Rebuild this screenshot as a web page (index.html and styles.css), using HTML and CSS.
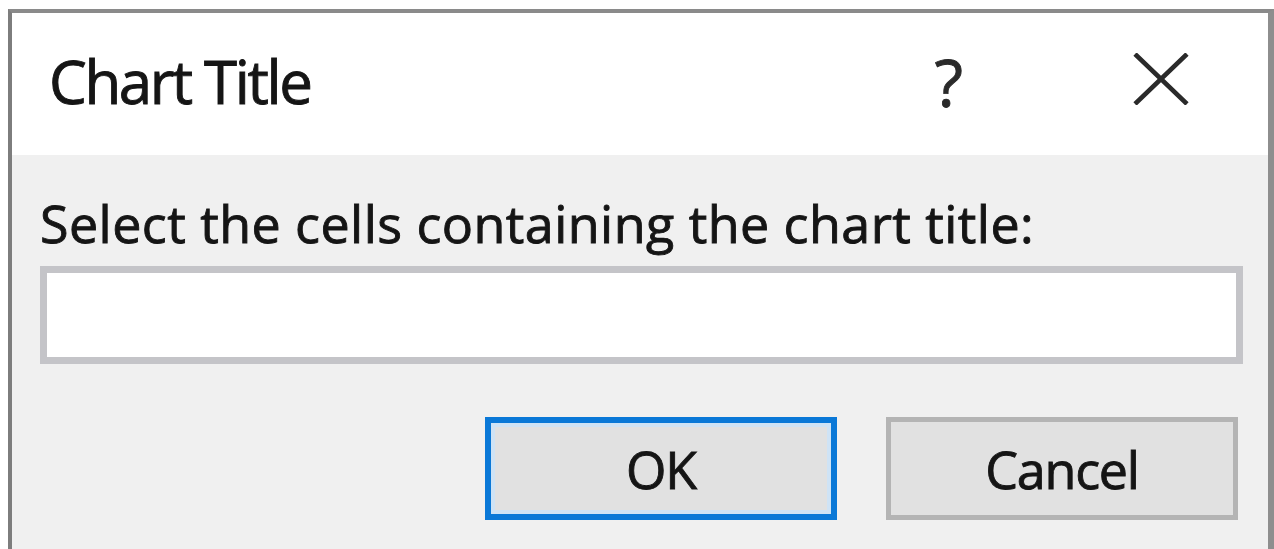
FILE: index.html
```html
<!DOCTYPE html>
<html lang="en">
<head>
<meta charset="utf-8">
<title>Chart Title</title>
<link rel="stylesheet" href="styles.css">
</head>
<body>
<div class="dialog">
  <div class="titlebar">
    <span class="title">Chart Title</span>
    <div class="title-actions">
      <span class="help">?</span>
      <svg class="close" width="56" height="52" viewBox="0 0 56 52" aria-hidden="true">
        <path d="M2 1 L54 51 M54 1 L2 51" stroke="#2a2a2a" stroke-width="4.6" fill="none"/>
      </svg>
    </div>
  </div>
  <div class="content">
    <label class="prompt" for="ref">Select the cells containing the chart title:</label>
    <div class="ref-input" id="ref"></div>
    <div class="buttons">
      <button class="btn btn-default">OK</button>
      <button class="btn">Cancel</button>
    </div>
  </div>
</div>
</body>
</html>
```

FILE: styles.css
```css
html, body {
  margin: 0;
  padding: 0;
  background: #ffffff;
  height: 100%;
  overflow: hidden;
}

body {
  font-family: "Open Sans", "Noto Sans", sans-serif;
  font-weight: 400;
  color: #151515;
}

/* Slightly heavier strokes for the dialog text */
.title,
.prompt,
.btn,
.help {
  -webkit-text-stroke: 0.9px currentColor;
}

.dialog {
  margin: 9px 0 0 8px;
  height: 540px;
  box-sizing: border-box;
  border-top: 4px solid #8a8a8a;
  border-left: 4px solid #7d7d7d;
  border-right: 6px solid #8e8e8e;
  background: #f0f0f0;
  display: flex;
  flex-direction: column;
}

.titlebar {
  height: 142px;
  background: #ffffff;
  display: flex;
  align-items: center;
  padding-left: 37px;
  box-sizing: border-box;
}

.title {
  font-size: 60px;
  letter-spacing: -2.4px;
  line-height: 1;
  padding-bottom: 6px;
}

.title-actions {
  margin-left: auto;
  display: flex;
  align-items: center;
}

.help {
  font-size: 66px;
  line-height: 1;
  color: #2a2a2a;
  margin-right: 170px;
  padding-bottom: 6px;
}

.close {
  display: block;
  margin-right: 79px;
  margin-bottom: 10px;
}

.content {
  flex: 1;
  padding: 42px 25px 0 28px;
  display: flex;
  flex-direction: column;
}

.prompt {
  font-size: 52px;
  letter-spacing: 0.45px;
  line-height: 1;
  color: #151515;
}

.ref-input {
  margin-top: 17px;
  height: 98px;
  box-sizing: border-box;
  background: #ffffff;
  border: 7px solid #c4c4c8;
}

.buttons {
  margin-top: 53px;
  display: flex;
  justify-content: flex-end;
  gap: 49px;
  padding-right: 5px;
}

.btn {
  width: 352px;
  height: 103px;
  box-sizing: border-box;
  background: #e1e1e1;
  border: 5px solid #b4b4b4;
  font-family: inherit;
  font-weight: 400;
  font-size: 52px;
  color: #151515;
  letter-spacing: -1.2px;
  padding: 0;
  line-height: 1;
}

.btn-default {
  border: 6px solid #0a78d7;
  box-shadow: inset 0 0 0 4px #cfe3f5;
}
```
